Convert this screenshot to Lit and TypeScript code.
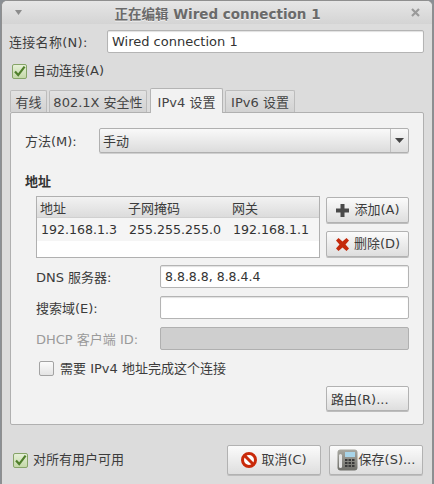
import { LitElement, html, css, svg } from "lit";
import { customElement } from "lit/decorators.js";

const check = svg`<svg class="chk" width="15" height="15" viewBox="0 0 15 15"><path d="M3 7.500l3.200 3.600L12.600 2.600" fill="none" stroke="#4f7f2c" stroke-width="2.200"/></svg>`;

@customElement("app-root")
export class AppRoot extends LitElement {
  static styles = css`
    :host { display: block; width: 434px; height: 484px; overflow: hidden; background: #8a8f94;
      font-family: "DejaVu Sans", "Noto Sans CJK SC", sans-serif; font-size: 13px; color: #3c3c3c; }
    * { box-sizing: border-box; }
    .win { width: 432px; height: 484px; margin-left: 1px; background: #dcdcdc; border: 1px solid #8f8f8f; border-bottom: none; border-radius: 6px 6px 0 0; display: flex; flex-direction: column; overflow: hidden; }
    .title { height: 23px; flex: none; display: flex; align-items: center; justify-content: space-between; padding: 0 12px 0 12px; background: linear-gradient(#e6e6e6, #d4d4d4); font-weight: bold; font-size: 13.500px; color: #6a6a6a; text-shadow: 0 1px 0 #f2f2f2; }
    .content { flex: 1; display: flex; flex-direction: column; padding: 6px 8px 0 7px; }
    .row { display: flex; align-items: center; }
    .namerow { height: 23px; }
    .namerow .lbl { width: 98px; flex: none; letter-spacing: 0.300px; }
    .input { height: 23px; background: #fff; border: 1px solid #b4b4b4; border-radius: 2px; box-shadow: inset 0 1px 1px #e0e0e0; padding: 0 4px; display: flex; align-items: center; color: #333; flex: 1; }
    .input.dis { background: #cfcfcf; border-color: #b0b0b0; box-shadow: none; }
    .num { font-size: 12.500px; }
    .cb { display: flex; align-items: center; gap: 6px; }
    .cb span { margin-bottom: 3px; }
    .box { width: 15px; height: 15px; flex: none; border: 1px solid #a3a3a3; border-radius: 2px; background: linear-gradient(#fbfbfb, #e4e4e4); }
    .box.on { background: linear-gradient(#e6f0d8, #c4d8a8); border-color: #86a468; }
    .chk { display: block; margin: -1px; }
    .auto { margin: 10px 0 0 3px; height: 16px; }
    .tabs { display: flex; gap: 2px; margin: 9px 0 0 1px; height: 24px; align-items: flex-end; position: relative; z-index: 1; }
    .tab { height: 22px; display: flex; align-items: center; justify-content: center; background: linear-gradient(#e2e2e2, #d2d2d2); border: 1px solid #bcbcbc; border-bottom: none; border-radius: 2px 2px 0 0; color: #444; }
    .tab.on { height: 25px; margin-bottom: -1px; background: #f2f2f2; border-color: #b4b4b4; margin-left: 1px; }
    .w1 { width: 37px; } .w2 { width: 98px; } .w3 { width: 73px; } .w4 { width: 70px; }
    .panel { height: 313px; margin-left: 1px; width: 414px; flex: none; background: #f2f2f2; border: 1px solid #b0b0b0; border-radius: 2px; padding: 15px 14px 0 14px; display: flex; flex-direction: column; }
    .combo { height: 25px; display: flex; align-items: center; }
    .combo .lbl { width: 74px; flex: none; }
    .sel { flex: 1; height: 25px; display: flex; align-items: center; background: linear-gradient(#f9f9f9, #dcdcdc); border: 1px solid #b0b0b0; border-radius: 2px; padding-left: 3px; box-shadow: 0 1px 0 #cfcfcf; }
    .sel span { flex: 1; }
    .arrow { width: 18px; height: 100%; border-left: 1px solid #c0c0c0; display: flex; align-items: center; justify-content: center; }
    .sect { font-weight: bold; margin-top: 21px; height: 16px; line-height: 16px; color: #333; }
    .addr { display: flex; margin: 6px 0 0 11px; }
    .table { width: 284px; height: 62px; flex: none; background: #fff; border: 1px solid #b0b0b0; }
    .thead, .tr { display: grid; grid-template-columns: 88px 104px 1fr; }
    .thead { height: 21px; background: linear-gradient(#f2f2f2, #dcdcdc); border-bottom: 1px solid #d0d0d0; align-items: center; padding-left: 3px; }
    .tr { height: 23px; background: #f5f5f5; align-items: center; padding-left: 4px; color: #333; font-size: 12.600px; }
    .side { margin-left: 6px; width: 83px; display: flex; flex-direction: column; gap: 8px; padding-top: 1px; }
    .btn { display: flex; align-items: center; justify-content: center; background: linear-gradient(#fbfbfb, #dedede); border: 1px solid #b2b2b2; border-radius: 2px; box-shadow: 0 1px 0 #bdbdbd; color: #3c3c3c; }
    .btn span { margin-bottom: 3px; }
    .side .btn { height: 26px; gap: 4px; }
    .form { display: grid; grid-template-columns: 124px 249px; row-gap: 8px; margin: 7px 0 0 11px; align-items: center; }
    .dimmed { color: #9a9a9a; }
    .req { margin: 11px 0 0 14px; height: 15px; gap: 6px; }
    .routes { display: flex; justify-content: flex-end; margin: 10px 0 0; }
    .routes .btn { width: 83px; height: 25px; justify-content: flex-start; padding-left: 4px; }
    .routes .btn span { margin-bottom: 0; }
    .bottom { display: flex; align-items: center; margin: 20px 1px 0 0; height: 30px; }
    .bottom .cb { margin-left: 4px; flex: 1; gap: 5px; }
    .bottom .btn { width: 94px; height: 30px; margin-left: 8px; gap: 4px; }
    .bottom .btn.save { gap: 1px; }
  `;

  render() {
    return html`<div class="win">
      <div class="title">
        <svg width="10" height="6" viewBox="0 0 10 6"><path d="M1 0h7L4.500 5z" fill="#8c8c8c"/></svg>
        <span>正在编辑 Wired connection 1</span>
        <svg width="9" height="9" viewBox="0 0 9 9"><path d="M1 1l7 7M8 1L1 8" stroke="#9a9a9a" stroke-width="2.200"/></svg>
      </div>
      <div class="content">
        <div class="row namerow"><span class="lbl">连接名称(N):</span><div class="input">Wired connection 1</div></div>
        <div class="cb auto"><div class="box on">${check}</div><span>自动连接(A)</span></div>
        <div class="tabs">
          <div class="tab w1">有线</div><div class="tab w2">802.1X 安全性</div><div class="tab on w3">IPv4 设置</div><div class="tab w4">IPv6 设置</div>
        </div>
        <div class="panel">
          <div class="combo"><span class="lbl">方法(M):</span>
            <div class="sel"><span>手动</span><div class="arrow"><svg width="9" height="5" viewBox="0 0 9 5"><path d="M0 0h9L4.500 5z" fill="#444"/></svg></div></div>
          </div>
          <div class="sect">地址</div>
          <div class="addr">
            <div class="table">
              <div class="thead"><span>地址</span><span>子网掩码</span><span>网关</span></div>
              <div class="tr"><span>192.168.1.3</span><span>255.255.255.0</span><span>192.168.1.1</span></div>
            </div>
            <div class="side">
              <div class="btn"><svg width="15" height="15" viewBox="0 0 15 15"><path d="M5.500 1h4v4.500H14v4H9.500V14h-4V9.500H1v-4h4.500z" fill="#4a4a4a"/></svg><span>添加(A)</span></div>
              <div class="btn"><svg width="15" height="15" viewBox="0 0 15 15"><path d="M1 3.500L3.500 1l4 3.500 4-3.500L14 3.500 10.500 7.500 14 11.500 11.500 14l-4-3.500-4 3.500L1 11.500l3.500-4z" fill="#c42a0c"/></svg><span>删除(D)</span></div>
            </div>
          </div>
          <div class="form">
            <span>DNS 服务器:</span><div class="input num">8.8.8.8, 8.8.4.4</div>
            <span>搜索域(E):</span><div class="input"></div>
            <span class="dimmed">DHCP 客户端 ID:</span><div class="input dis"></div>
          </div>
          <div class="cb req"><div class="box"></div><span>需要 IPv4 地址完成这个连接</span></div>
          <div class="routes"><div class="btn"><span>路由(R)...</span></div></div>
        </div>
        <div class="bottom">
          <div class="cb"><div class="box on">${check}</div><span>对所有用户可用</span></div>
          <div class="btn"><svg width="16" height="16" viewBox="0 0 16 16"><circle cx="8" cy="8" r="6.500" fill="#fff" stroke="#c92a0a" stroke-width="3"/><path d="M3.500 3.500l9 9" stroke="#c92a0a" stroke-width="3"/></svg><span>取消(C)</span></div>
          <div class="btn save"><svg width="21" height="22" viewBox="0 0 21 22"><defs><linearGradient id="ph" x1="0" y1="0" x2="0" y2="1"><stop offset="0" stop-color="#a9a9a2"/><stop offset="1" stop-color="#6f6f6a"/></linearGradient></defs><rect x="0.500" y="0.500" width="20" height="21" rx="3" fill="url(#ph)"/><rect x="2" y="5" width="3" height="14" rx="1.500" fill="#e4e4e4"/><rect x="8" y="3" width="10" height="5" fill="#a8d4e8"/><path d="M8 10h2.500v2H8zM11.500 10h2.500v2h-2.500zM15 10h2.500v2H15zM8 13h2.500v2H8zM11.500 13h2.500v2h-2.500zM15 13h2.500v2H15zM8 16h2.500v2H8zM11.500 16h2.500v2h-2.500zM15 16h2.500v2H15z" fill="#3a3a3a"/></svg><span>保存(S)...</span></div>
        </div>
      </div>
    </div>`;
  }
}
